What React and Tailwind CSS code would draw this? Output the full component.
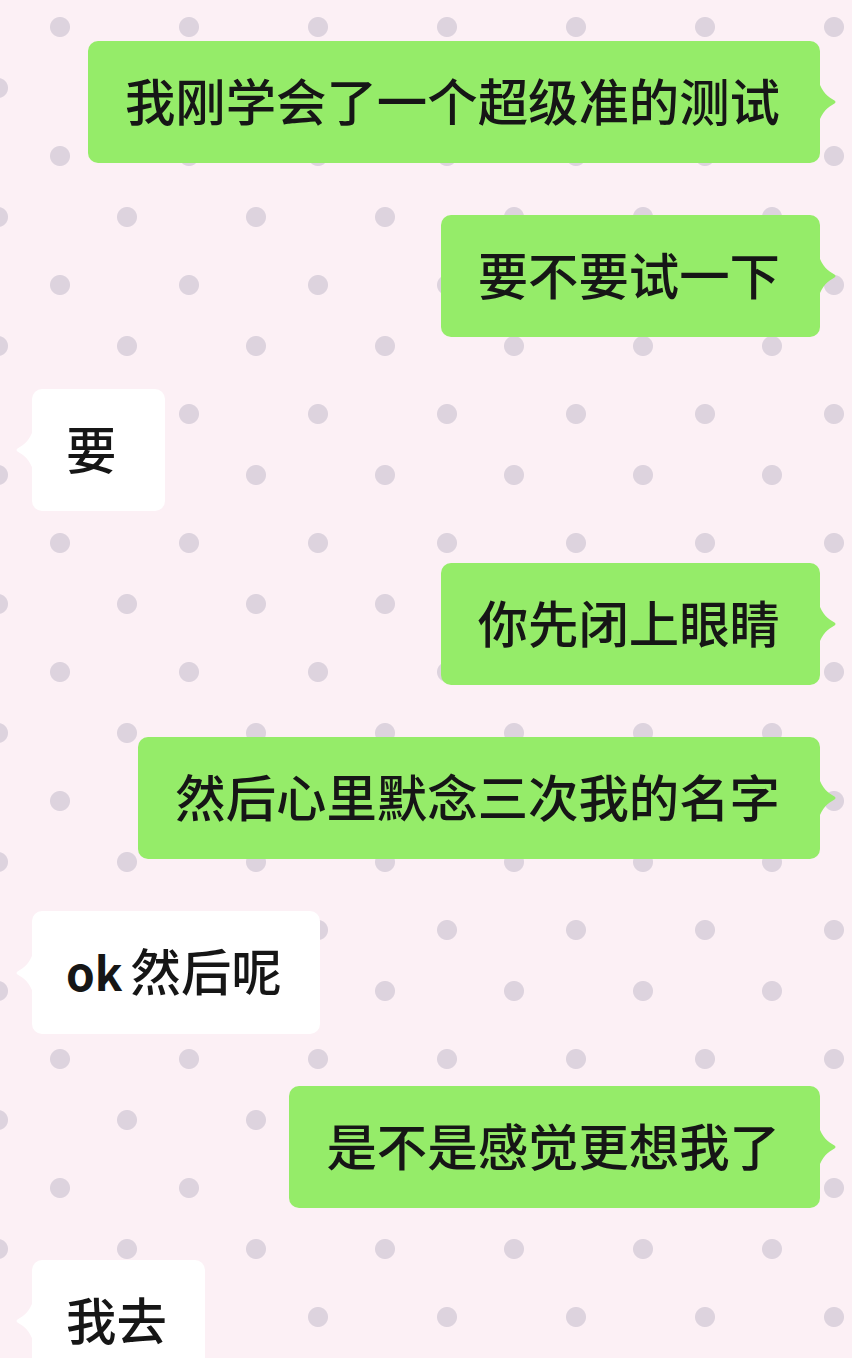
import React from 'react'

const messages = [
  { side: 'right', text: '我刚学会了一个超级准的测试' },
  { side: 'right', text: '要不要试一下' },
  { side: 'left', text: '要' },
  { side: 'right', text: '你先闭上眼睛' },
  { side: 'right', text: '然后心里默念三次我的名字' },
  { side: 'left', text: '然后呢', latin: 'ok' },
  { side: 'right', text: '是不是感觉更想我了' },
  { side: 'left', text: '我去' },
]

function Tail({ side }) {
  const color = side === 'right' ? '#95ec69' : '#ffffff'
  if (side === 'right') {
    return (
      <svg
        className="absolute left-full top-1/2 -translate-y-1/2 -ml-px"
        width="18"
        height="40"
        viewBox="0 0 18 40"
      >
        <path d="M0 0 C3 10 9 15 15.5 18.5 Q17.5 20 15.5 21.5 C9 25 3 30 0 40 Z" fill={color} />
      </svg>
    )
  }
  return (
    <svg
      className="absolute right-full top-1/2 -translate-y-1/2 -mr-px"
      width="18"
      height="40"
      viewBox="0 0 18 40"
    >
      <path d="M18 0 C15 10 9 15 2.5 18.5 Q0.5 20 2.5 21.5 C9 25 15 30 18 40 Z" fill={color} />
    </svg>
  )
}

function Bubble({ msg }) {
  const right = msg.side === 'right'
  return (
    <div
      className={`relative rounded-[10px] pt-[24px] pb-[28px] text-[50.4px] leading-[70px] font-medium text-[#161616] whitespace-nowrap ${
        right ? 'self-end bg-[#95ec69] pl-[37px] pr-[40px]' : 'self-start bg-white pl-[34px] pr-[38px]'
      } ${msg.text === '要' ? 'min-w-[133px]' : ''}`}
    >
      {msg.latin && <span className="font-bold text-[46px] mr-[8px]">{msg.latin}</span>}
      {msg.text}
      <Tail side={msg.side} />
    </div>
  )
}

export default function App() {
  return (
    <div
      className="w-[852px] h-[1358px] overflow-hidden bg-[#fcf0f5] [background-image:radial-gradient(circle_at_31px_31px,#ddd3de_9.5px,transparent_10.5px),radial-gradient(circle_at_98px_92px,#ddd3de_9.5px,transparent_10.5px)] [background-size:129px_129px] [background-position:29px_-4px]"
      style={{ fontFamily: '"Noto Sans CJK SC", "Noto Sans", sans-serif' }}
    >
      <div className="flex flex-col gap-[52px] px-[32px] pt-[41px]">
        {messages.map((m, i) => (
          <Bubble key={i} msg={m} />
        ))}
      </div>
    </div>
  )
}
